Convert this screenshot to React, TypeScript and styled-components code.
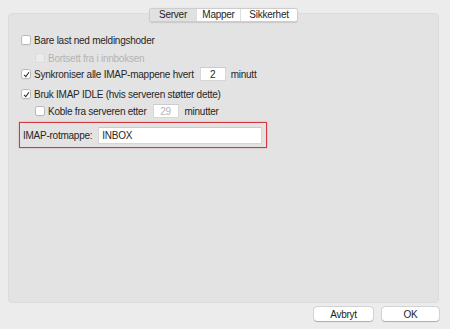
import React from 'react';
import styled, { createGlobalStyle } from 'styled-components';

const GlobalStyle = createGlobalStyle`
  html, body {
    margin: 0;
    padding: 0;
    background: #ececec;
  }
  body {
    font-family: "Liberation Sans", Arial, sans-serif;
    font-size: 10px;
    letter-spacing: -0.25px;
    color: #262626;
  }
`;

const Window = styled.div`
  width: 450px;
  height: 329px;
  display: flex;
  flex-direction: column;
  padding: 8px 11px 0 8px;
  box-sizing: border-box;
`;

const TabBar = styled.div`
  align-self: center;
  display: flex;
  height: 12px;
  border: 1px solid #cdcdcd;
  border-radius: 3px;
  background: #fff;
  overflow: hidden;
  position: relative;
  z-index: 1;
  box-shadow: 0 0.5px 1px rgba(0, 0, 0, 0.12);
`;

const Tab = styled.div<{ $active?: boolean; $w: number }>`
  width: ${p => p.$w}px;
  box-sizing: border-box;
  display: flex;
  align-items: center;
  justify-content: center;
  line-height: 12px;
  background: ${p => (p.$active ? '#e1e1e1' : '#fff')};
  border-right: 1px solid #dedede;
  color: #1e1e1e;
  &:last-child {
    border-right: none;
  }
`;

const Panel = styled.div`
  flex: 0 0 auto;
  height: 290px;
  margin-top: -9px;
  background: #e3e3e3;
  border: 1px solid #dcdcdc;
  border-radius: 4px;
  box-sizing: border-box;
  padding: 18px 0 0 12px;
  display: flex;
  flex-direction: column;
`;

const Row = styled.div<{ $indent?: number; $top?: number; $h?: number }>`
  display: flex;
  align-items: center;
  height: ${p => p.$h ?? 16}px;
  margin-top: ${p => p.$top ?? 0}px;
  padding-left: ${p => (p.$indent ?? 0) * 14}px;
`;

const Box = styled.span<{ $disabled?: boolean }>`
  width: 10px;
  height: 10px;
  box-sizing: border-box;
  border-radius: 2.5px;
  border: 1px solid ${p => (p.$disabled ? '#dadada' : '#b9b9b9')};
  background: ${p => (p.$disabled ? '#ebebeb' : '#fff')};
  display: inline-flex;
  align-items: center;
  justify-content: center;
  margin-right: 3px;
  flex: none;
  box-shadow: ${p => (p.$disabled ? 'none' : '0 0.5px 0.5px rgba(0,0,0,0.08)')};
`;

const Label = styled.span<{ $disabled?: boolean }>`
  color: ${p => (p.$disabled ? '#b4b4b4' : '#262626')};
  white-space: nowrap;
`;

const Field = styled.span<{ $w: number; $h?: number; $disabled?: boolean; $align?: string; $ml?: number; $mr?: number }>`
  width: ${p => p.$w}px;
  height: ${p => p.$h ?? 14}px;
  margin: 0 ${p => p.$mr ?? 0}px 0 ${p => p.$ml ?? 0}px;
  box-sizing: border-box;
  background: #fff;
  border: 1px solid #d6d6d6;
  border-top-color: #cbcbcb;
  display: inline-flex;
  align-items: center;
  justify-content: ${p => p.$align ?? 'center'};
  padding: 0 3px;
  color: ${p => (p.$disabled ? '#b4b4b4' : '#262626')};
  flex: none;
`;

const Highlight = styled.div`
  width: 248px;
  height: 26px;
  margin: 3px 0 0 -2px;
  box-sizing: border-box;
  border: 1px solid #d2393f;
  box-shadow: 0 0 1.5px rgba(210, 57, 63, 0.45);
  display: flex;
  align-items: center;
  padding-left: 3px;
  gap: 6px;
`;

const Footer = styled.div`
  display: flex;
  justify-content: flex-end;
  gap: 9px;
  margin-top: 4px;
`;

const Button = styled.div<{ $w: number }>`
  width: ${p => p.$w}px;
  height: 14px;
  background: #fff;
  border-radius: 3px;
  box-shadow: 0 0 0 0.5px rgba(0, 0, 0, 0.18), 0 0.5px 1px rgba(0, 0, 0, 0.2);
  display: flex;
  align-items: center;
  justify-content: center;
  color: #1e1e1e;
`;

function Check({ checked, disabled }: { checked?: boolean; disabled?: boolean }) {
  return (
    <Box $disabled={disabled}>
      {checked && (
        <svg width="7" height="7" viewBox="0 0 7 7">
          <path d="M1 3.8 L2.8 5.6 L6 1.2" fill="none" stroke="#333" strokeWidth="1.1" />
        </svg>
      )}
    </Box>
  );
}

export default function App() {
  return (
    <>
      <GlobalStyle />
      <Window>
        <TabBar>
          <Tab $w={47} $active>Server</Tab>
          <Tab $w={44}>Mapper</Tab>
          <Tab $w={56}>Sikkerhet</Tab>
        </TabBar>
        <Panel>
          <Row>
            <Check />
            <Label>Bare last ned meldingshoder</Label>
          </Row>
          <Row $indent={1} $top={2}>
            <Check disabled />
            <Label $disabled>Bortsett fra i innboksen</Label>
          </Row>
          <Row>
            <Check checked />
            <Label>Synkroniser alle IMAP-mappene hvert</Label>
            <Field $w={26} $ml={6} $mr={5}>2</Field>
            <Label>minutt</Label>
          </Row>
          <Row $top={4}>
            <Check checked />
            <Label>Bruk IMAP IDLE (hvis serveren støtter dette)</Label>
          </Row>
          <Row $indent={1} $top={1}>
            <Check />
            <Label>Koble fra serveren etter</Label>
            <Field $w={26} $disabled $ml={6} $mr={6}>29</Field>
            <Label>minutter</Label>
          </Row>
          <Highlight>
            <Label>IMAP-rotmappe:</Label>
            <Field $w={164} $h={17} $align="flex-start">INBOX</Field>
          </Highlight>
        </Panel>
        <Footer>
          <Button $w={59}>Avbryt</Button>
          <Button $w={57}>OK</Button>
        </Footer>
      </Window>
    </>
  );
}
